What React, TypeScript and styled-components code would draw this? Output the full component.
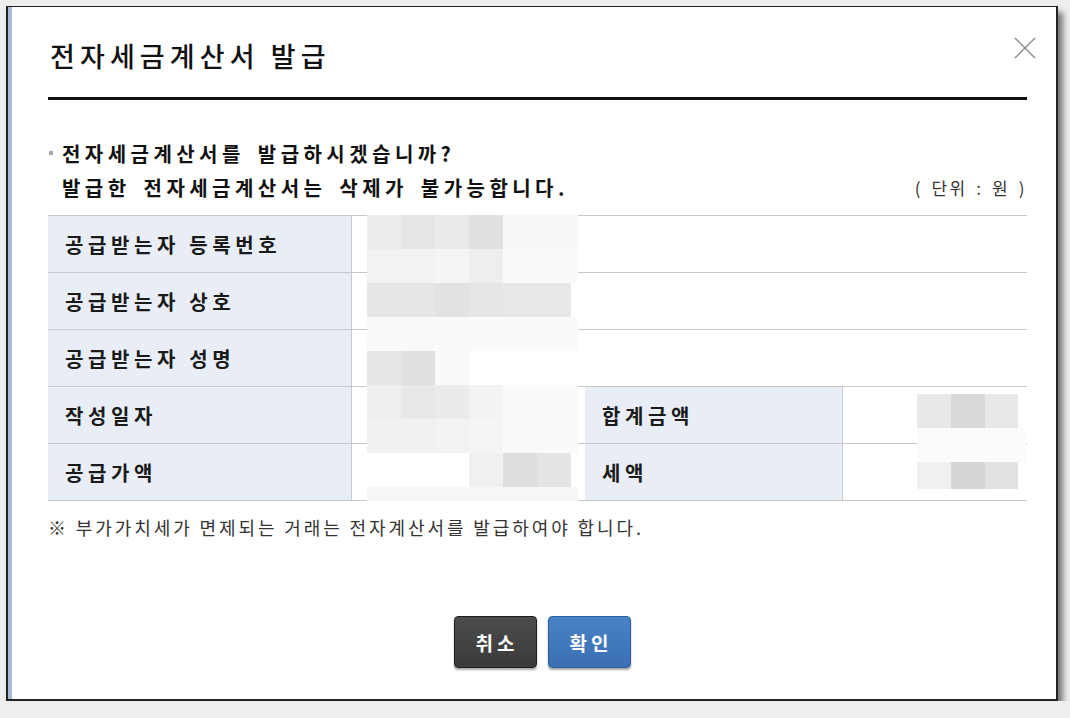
import { FC } from "react";
import styled, { createGlobalStyle } from "styled-components";

const GlobalStyle = createGlobalStyle`
  html, body {
    margin: 0;
    padding: 0;
    background: #eeeeee;
  }
  body {
    font-family: "Noto Sans CJK KR", "Noto Sans", sans-serif;
    color: #222;
  }
`;

// 모자이크 처리된 영역 (개인정보 가림)
const LEFT_MOSAIC: (string | null)[][] = [
  ["#ececec", "#e6e6e6", "#ebebeb", "#e0e0e0", "#f7f7f7", "#f7f7f7", "#f7f7f7"],
  ["#f2f2f2", "#f2f2f2", "#f5f5f5", "#eeeeee", "#fafafa", "#fafafa", "#fafafa"],
  ["#e6e6e6", "#e6e6e6", "#e2e2e2", "#e6e6e6", "#e8e8e8", "#e8e8e8", "#ffffff"],
  ["#f9f9f9", "#f9f9f9", "#fafafa", "#fafafa", "#fafafa", "#fafafa", "#fafafa"],
  ["#e6e6e6", "#e0e0e0", "#f9f9f9", "#ffffff", "#ffffff", "#ffffff", "#ffffff"],
  ["#efefef", "#e8e8e8", "#ebebeb", "#f3f3f3", "#fafafa", "#fafafa", "#fafafa"],
  ["#f1f1f1", "#f1f1f1", "#f3f3f3", "#f5f5f5", "#fafafa", "#fafafa", "#fafafa"],
  ["#ffffff", "#ffffff", "#ffffff", "#f0f0f0", "#dedede", "#e4e4e4", "#ffffff"],
  ["#f6f6f6", "#f6f6f6", "#f6f6f6", "#f6f6f6", "#f6f6f6", "#f6f6f6", "#f6f6f6"],
];

const RIGHT_MOSAIC: (string | null)[][] = [
  ["#e8e8e8", "#d9d9d9", "#e8e8e8", null],
  ["#fbfbfb", "#fbfbfb", "#fbfbfb", "#fbfbfb"],
  ["#f0f0f0", "#d6d6d6", "#e2e2e2", null],
];

const Mosaic: FC<{
  tiles: (string | null)[][];
  cols: string;
  rows: string;
  left: number;
  top: number;
}> = ({ tiles, cols, rows, left, top }) => (
  <MosaicGrid $cols={cols} $rows={rows} $left={left} $top={top}>
    {tiles.flatMap((row, r) =>
      row.map((c, i) => <Tile key={`${r}-${i}`} $c={c ?? "transparent"} />)
    )}
  </MosaicGrid>
);

const App: FC = () => {
  return (
    <>
      <GlobalStyle />
      <Window>
        <Header>
          <Title>전자세금계산서 발급</Title>
          <CloseButton aria-label="닫기">
            <svg width="22" height="22" viewBox="0 0 22 22">
              <path
                d="M1 1 L21 21 M21 1 L1 21"
                stroke="#8a8a8a"
                strokeWidth="1.4"
                fill="none"
              />
            </svg>
          </CloseButton>
        </Header>

        <Intro>
          <IntroLine>
            <Bullet />
            전자세금계산서를 발급하시겠습니까?
          </IntroLine>
          <IntroRow>
            <IntroLine $indent>발급한 전자세금계산서는 삭제가 불가능합니다.</IntroLine>
            <Unit>( 단위 : 원 )</Unit>
          </IntroRow>
        </Intro>

        <TableWrap>
          <InfoTable>
            <colgroup>
              <col style={{ width: 303 }} />
              <col style={{ width: 234 }} />
              <col style={{ width: 257 }} />
              <col style={{ width: 185 }} />
            </colgroup>
            <tbody>
              <tr>
                <Label>공급받는자 등록번호</Label>
                <Value colSpan={3} />
              </tr>
              <tr>
                <Label>공급받는자 상호</Label>
                <Value colSpan={3} />
              </tr>
              <tr>
                <Label>공급받는자 성명</Label>
                <Value colSpan={3} />
              </tr>
              <tr>
                <Label>작성일자</Label>
                <Value />
                <Label>합계금액</Label>
                <Value />
              </tr>
              <tr>
                <Label>공급가액</Label>
                <Value />
                <Label>세액</Label>
                <Value />
              </tr>
            </tbody>
          </InfoTable>
          <Mosaic
            tiles={LEFT_MOSAIC}
            cols="repeat(6, 34px) 7px"
            rows="repeat(8, 34px) 14px"
            left={319}
            top={0}
          />
          <Mosaic
            tiles={RIGHT_MOSAIC}
            cols="34px 34px 33px 8px"
            rows="34px 34px 27px"
            left={869}
            top={179}
          />
        </TableWrap>

        <Note>※ 부가가치세가 면제되는 거래는 전자계산서를 발급하여야 합니다.</Note>

        <Footer>
          <Button $variant="dark">취소</Button>
          <Button $variant="blue">확인</Button>
        </Footer>
      </Window>
    </>
  );
};

export default App;

const Window = styled.div`
  box-sizing: border-box;
  margin: 6px 0 0 6px;
  width: 1052px;
  height: 695px;
  background: #fff;
  border: 2px solid #222;
  border-top-width: 1px;
  box-shadow: inset 4px 0 0 #a9b8d2, 5px 6px 6px rgba(0, 0, 0, 0.5);
  padding: 0 29px 0 40px;
`;

const Header = styled.div`
  display: flex;
  justify-content: space-between;
  align-items: flex-start;
  padding: 33px 0 25px 2px;
  border-bottom: 3px solid #111;
`;

const Title = styled.h1`
  margin: 0;
  font-size: 27px;
  line-height: 32px;
  font-weight: 500;
  letter-spacing: 5.1px;
  color: #111;
`;

const CloseButton = styled.button`
  display: flex;
  border: 0;
  padding: 0;
  background: none;
  margin: -3px -9px 0 0;
  cursor: pointer;
`;

const Intro = styled.div`
  margin-top: 36px;
  padding-left: 1px;
`;

const IntroRow = styled.div`
  display: flex;
  justify-content: space-between;
  align-items: center;
`;

const IntroLine = styled.div<{ $indent?: boolean }>`
  display: flex;
  align-items: center;
  height: 34px;
  font-size: 20px;
  font-weight: 700;
  letter-spacing: 4.45px;
  word-spacing: 4px;
  color: #111;
  padding-left: ${(p) => (p.$indent ? "13px" : "0")};
`;

const Bullet = styled.span`
  width: 4px;
  height: 4px;
  background: #a8a8a8;
  margin-right: 9px;
`;

const Unit = styled.div`
  font-size: 17px;
  letter-spacing: 2.6px;
  word-spacing: 2px;
  color: #333;
`;

const TableWrap = styled.div`
  position: relative;
  margin-top: 11px;
`;

const InfoTable = styled.table`
  width: 979px;
  border-collapse: collapse;
  table-layout: fixed;
  border-top: 1px solid #c8c8c8;
`;

const Label = styled.th`
  height: 56px;
  padding: 0 0 0 17px;
  background: #e9eef6;
  border-bottom: 1px solid #c8cacd;
  border-right: 1px solid #c6cad2;
  text-align: left;
  font-size: 20px;
  font-weight: 700;
  letter-spacing: 4.6px;
  color: #1a1a1a;
`;

const Value = styled.td`
  height: 56px;
  padding: 0;
  border-bottom: 1px solid #c8c8c8;
  background: #fff;
`;

const MosaicGrid = styled.div<{
  $cols: string;
  $rows: string;
  $left: number;
  $top: number;
}>`
  position: absolute;
  left: ${(p) => p.$left}px;
  top: ${(p) => p.$top}px;
  display: grid;
  grid-template-columns: ${(p) => p.$cols};
  grid-template-rows: ${(p) => p.$rows};
`;

const Tile = styled.div<{ $c: string }>`
  background: ${(p) => p.$c};
`;

const Note = styled.p`
  margin: 14px 0 0;
  font-size: 18px;
  line-height: 24px;
  letter-spacing: 2.9px;
  color: #333;
`;

const Footer = styled.div`
  display: flex;
  justify-content: center;
  gap: 11px;
  margin-top: 77px;
  padding-left: 9px;
`;

const Button = styled.button<{ $variant: "dark" | "blue" }>`
  width: 83px;
  height: 52px;
  border-radius: 4px;
  border: 1px solid ${(p) => (p.$variant === "dark" ? "#1e1e1e" : "#2e5f9c")};
  background: ${(p) =>
    p.$variant === "dark"
      ? "linear-gradient(#4c4c4c, #3a3a3a)"
      : "linear-gradient(#4a82c6, #3a70b3)"};
  box-shadow: 0 2px 2px rgba(0, 0, 0, 0.35);
  color: #fff;
  font-family: "Noto Sans CJK KR", sans-serif;
  font-size: 19px;
  font-weight: 700;
  letter-spacing: 4px;
  padding: 0 0 0 4px;
  cursor: pointer;
`;
